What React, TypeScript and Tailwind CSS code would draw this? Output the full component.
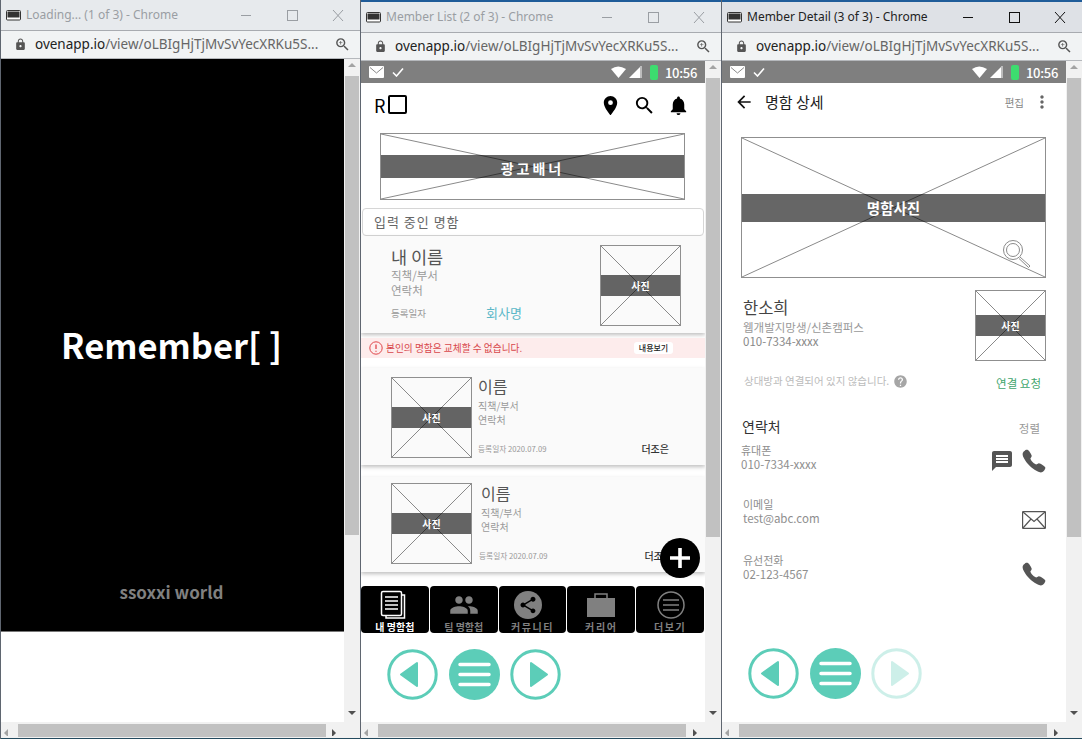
import React from 'react';
import {
  MdLocationOn,
  MdSearch,
  MdNotifications,
  MdArrowBack,
  MdMoreVert,
  MdMessage,
  MdPeople,
  MdHelp,
  MdShare,
  MdLock,
  MdZoomIn,
} from 'react-icons/md';
import { IoCall } from 'react-icons/io5';

const KR = "font-['Noto_Sans_CJK_KR','Noto_Sans',sans-serif]";

const ScrollArrow = ({ dir }: { dir: 'up' | 'down' | 'left' | 'right' }) => {
  const points = { up: '4,7 8,3 12,7', down: '4,4 12,4 8,8', left: '7,4 7,12 3,8', right: '4,4 4,12 8,8' }[dir];
  return (
    <svg viewBox="0 0 16 11" className="w-4 h-[11px] shrink-0">
      <polygon points={points} fill={dir === 'up' || dir === 'left' ? '#a3a3a3' : '#505050'} />
    </svg>
  );
};

const Window = ({
  title,
  active,
  first,
  children,
  className,
}: {
  title: string;
  active?: boolean;
  first?: boolean;
  children: React.ReactNode;
  className: string;
}) => {
  const fg = active ? 'text-[#222]' : 'text-[#9a9ea3]';
  return (
    <div className={`${className} h-full flex flex-col border-l border-[#5f6670] shrink-0 ${active ? 'bg-[#dee1e6]' : 'bg-[#e7eaed]'}`}>
      {!first && <div className="h-0.5 bg-[#1f5c99] shrink-0" />}
      <div className={`h-[31px] shrink-0 flex items-center pl-[5px] text-[12px] border-b border-[#a8abb0] font-['Noto_Sans',sans-serif] ${fg}`}>
        <svg viewBox="0 0 15 11" className="w-[15px] h-[11px] mr-[5px] shrink-0">
          <rect x="0.5" y="0.5" width="14" height="9.5" rx="1" fill="#fff" stroke="#333" />
          <rect x="1.5" y="1.5" width="12" height="6" fill="#333" />
        </svg>
        <span>{title}</span>
        <svg viewBox="0 0 110 16" className={`w-[110px] h-4 ml-auto mr-3 ${active ? 'text-[#111]' : 'text-[#9a9ea3]'}`} fill="none" stroke="currentColor">
          <path d="M3 8.5H13" />
          <rect x="49.5" y="3.5" width="10" height="10" />
          <path d="M95 3L105 14M105 3L95 14" />
        </svg>
      </div>
      <div className="h-[28px] shrink-0 flex items-center bg-[#f1f3f4] border-b border-[#b5b8bc] pl-[13px] text-[13.5px] font-['Noto_Sans',sans-serif]">
        <MdLock className="w-[13px] h-[13px] text-[#555] mr-2 shrink-0" />
        <span className="whitespace-nowrap">
          <span className="text-[#222]">ovenapp.io</span>
          <span className="text-[#666]">/view/oLBIgHjTjMvSvYecXRKu5S...</span>
        </span>
        <MdZoomIn className="w-[17px] h-[17px] text-[#555] ml-auto mr-[9px] shrink-0" />
      </div>
      <div className="flex-1 min-h-0 flex">
        <div className="flex-1 min-w-0 bg-white overflow-hidden relative">{children}</div>
        <div className="w-4 shrink-0 bg-[#f1f1f1] flex flex-col pt-[1px] pb-1">
          <ScrollArrow dir="up" />
          <div className="mx-px mt-[5px] h-[459px] bg-[#c1c1c1]" />
          <div className="flex-1" />
          <ScrollArrow dir="down" />
        </div>
      </div>
      <div className="h-4 shrink-0 bg-[#f1f1f1] flex items-center">
        <ScrollArrow dir="left" />
        <div className="h-[13px] w-[308px] ml-px bg-[#c1c1c1]" />
        <div className="ml-auto flex items-center pr-4">
          <ScrollArrow dir="right" />
        </div>
      </div>
      <div className="h-px bg-[#244a5e] shrink-0" />
    </div>
  );
};

const StatusBar = () => (
  <div className="h-[22px] bg-[#7f7f7f] flex items-center pl-2 pr-2 shrink-0">
    <svg viewBox="0 0 15 12" className="w-[15px] h-3">
      <rect width="15" height="12" rx="1" fill="#fff" />
      <path d="M1 1.5L7.5 7L14 1.5" fill="none" stroke="#8a8a8a" />
    </svg>
    <svg viewBox="0 0 12 10" className="w-3 h-[10px] ml-[8px]">
      <path d="M1 5.5L4.5 9L11 1.5" fill="none" stroke="#fff" strokeWidth="1.6" />
    </svg>
    <svg viewBox="0 0 32 14" className="w-8 h-[14px] ml-auto">
      <path d="M0 4Q7 -1 15 4L7.5 13Z" fill="#fff" />
      <path d="M18 13L30 1V13Z" fill="#fff" />
      <rect x="29" y="1" width="2" height="12" fill="#bdbdbd" />
    </svg>
    <div className="w-2 h-[15px] rounded-[2px] bg-[#3ddc6f] ml-[7px]" />
    <span className={`text-[13px] leading-none text-white font-medium ml-[7px] tracking-[-0.3px] ${KR}`}>10:56</span>
  </div>
);

const Photo = ({ label, className, band, text }: { label: string; className: string; band: string; text: string }) => (
  <div className={`${className} relative flex items-center shrink-0 border border-[#8f8f8f] ${KR}`}>
    <svg className="absolute inset-0 w-full h-full" viewBox="0 0 100 100" preserveAspectRatio="none">
      <path d="M0 0L100 100M100 0L0 100" stroke="#8a8a8a" strokeWidth="1" vectorEffect="non-scaling-stroke" />
    </svg>
    <div className={`${band} relative w-full bg-black/60 flex items-center justify-center text-white font-bold ${text}`}>
      {label}
    </div>
  </div>
);

const ListCard = ({
  className,
  textClass,
  photoClass,
  dateClass,
}: {
  className: string;
  textClass: string;
  photoClass: string;
  dateClass?: string;
}) => (
  <div className={`${className} bg-[#fafafa] shadow-[0_2px_4px_rgba(0,0,0,0.25)] flex pl-[30px]`}>
    <Photo label="사진" className={`w-[81px] h-[81px] ${photoClass}`} band="h-[21px]" text="text-[10px]" />
    <div className={`${textClass} w-[191px]`}>
      <p className="text-[16px] leading-5 text-[#555]">이름</p>
      <p className="text-[10px] leading-[14px] text-[#999] mt-[3px]">직책/부서</p>
      <p className="text-[10px] leading-[14px] text-[#999]">연락처</p>
      <div className={`flex items-center justify-between mt-[15px] ${dateClass ?? ''}`}>
        <span className="text-[7.7px] leading-3 text-[#999]">등록일자 2020.07.09</span>
        <span className="text-[10px] leading-3 font-medium text-[#333] pt-px">더조은</span>
      </div>
    </div>
  </div>
);

const TabItem = ({ label, active, icon, spaced, iconClass }: { label: string; active?: boolean; icon: React.ReactNode; spaced?: boolean; iconClass?: string }) => (
  <div className="bg-black rounded-[4px] flex flex-col items-center pt-[3px] min-w-0">
    <div className={`h-[32px] flex items-center justify-center ${iconClass ?? ''}`}>{icon}</div>
    <span className={`text-[10px] leading-[11px] font-bold whitespace-nowrap ${spaced ? 'tracking-[1.6px]' : ''} ${active ? 'text-white' : 'text-[#808080]'}`}>{label}</span>
  </div>
);

const NavButtons = ({ nextDisabled }: { nextDisabled?: boolean }) => (
  <div className="flex gap-[10.5px] ml-[26px]">
    <svg viewBox="0 0 51 51" className="w-[51px] h-[51px]">
      <circle cx="25.5" cy="25.5" r="23.7" fill="#fff" stroke="#5ccdb8" strokeWidth="3" />
      <path d="M30 14V37L14 25.5Z" fill="#5ccdb8" stroke="#5ccdb8" strokeWidth="2" strokeLinejoin="round" />
    </svg>
    <svg viewBox="0 0 51 51" className="w-[51px] h-[51px]">
      <circle cx="25.5" cy="25.5" r="25.5" fill="#5ccdb8" />
      <path d="M11 15.5H40M11 25.5H40M11 35.5H40" stroke="#fff" strokeWidth="3.5" strokeLinecap="round" />
    </svg>
    <svg viewBox="0 0 51 51" className={`w-[51px] h-[51px] ${nextDisabled ? 'opacity-30' : ''}`}>
      <circle cx="25.5" cy="25.5" r="23.7" fill="#fff" stroke="#5ccdb8" strokeWidth="3" />
      <path d="M21 14V37L37 25.5Z" fill="#5ccdb8" stroke="#5ccdb8" strokeWidth="2" strokeLinejoin="round" />
    </svg>
  </div>
);

const ContactRow = ({ label, value, className, children }: { label: string; value: string; className: string; children: React.ReactNode }) => (
  <div className={`${className} flex items-center pr-[19px]`}>
    <div className="text-[#8e8e8e]">
      <p className="text-[11px] leading-[13px]">{label}</p>
      <p className="text-[11.5px] leading-[14px]">{value}</p>
    </div>
    <div className="ml-auto flex items-center gap-[7px] text-[#555]">{children}</div>
  </div>
);

const ListScreen = () => (
  <div className={`h-full flex flex-col ${KR}`}>
    <StatusBar />
    <div className="h-[50px] shrink-0 flex items-start pt-[11px] pl-[13px]">
      <span className="text-[18px] leading-[22px] text-black">R</span>
      <div className="w-[19px] h-[19px] border-2 border-black rounded-[2px] ml-[3px] mt-px" />
      <MdLocationOn className="w-[23px] h-[23px] ml-[192px] text-black" />
      <MdSearch className="w-[23px] h-[23px] ml-[11px] text-black" />
      <MdNotifications className="w-[23px] h-[23px] ml-[11px] text-black" />
    </div>
    <Photo label="광고배너" className="w-[305px] h-[67px] ml-[19px]" band="h-[23px] pt-[3px]" text="text-[14px] tracking-[3px]" />
    <div className="h-[28px] mt-2 ml-px w-[342px] border border-[#d6d6d6] rounded-[4px] flex items-center pl-[11px] text-[13px] text-[#666] tracking-[1px] shrink-0">
      입력 중인 명함
    </div>
    <div className="h-[97px] shrink-0 bg-[#fafafa] shadow-[0_2px_4px_rgba(0,0,0,0.25)] flex pl-[30px]">
      <div className="pt-[11px] flex-1">
        <p className="text-[17.5px] leading-5 text-[#555]">내 이름</p>
        <p className="text-[11.5px] leading-[15px] mt-[1px] text-[#999]">직책/부서</p>
        <p className="text-[11.5px] leading-[15px] text-[#999]">연락처</p>
        <div className="flex items-center mt-[5px]">
          <span className="text-[9.5px] text-[#999] w-[95px] leading-5">등록일자</span>
          <span className="text-[13px] text-[#5bb8c8] leading-5">회사명</span>
        </div>
      </div>
      <Photo label="사진" className="w-[81px] h-[81px] mt-[9px] mr-[24px]" band="h-[21px]" text="text-[10px]" />
    </div>
    <div className="h-5 mt-[5px] shrink-0 bg-[#fdecec] flex items-center pl-2 pr-[32px]">
      <svg viewBox="0 0 14 14" className="w-[14px] h-[14px] shrink-0">
        <circle cx="7" cy="7" r="6.2" fill="none" stroke="#e0464a" />
        <path d="M7 3.5V8M7 9.7V10.8" stroke="#e0464a" strokeWidth="1.3" />
      </svg>
      <span className="text-[9.7px] text-[#d8474b] ml-[3px]">본인의 명함은 교체할 수 없습니다.</span>
      <span className="ml-auto bg-white rounded-[3px] w-[39px] h-3 flex items-center justify-center text-[8px] font-medium text-[#222]">내용보기</span>
    </div>
    <ListCard className="h-[97px] mt-[10px] shrink-0" textClass="ml-[6px] pt-2" photoClass="mt-[9px]" />
    <ListCard className="h-[95px] mt-3 shrink-0" textClass="ml-[9px] pt-[6px]" photoClass="mt-[6px]" dateClass="-ml-[2px]" />
    <div className="grid grid-cols-5 gap-px w-[343px] h-[47px] mt-[14px] shrink-0">
      <TabItem
        label="내 명함첩"
        active
        iconClass="pr-[3px]"
        icon={
          <svg viewBox="0 0 26 30" className="w-[26px] h-[30px]" fill="none" stroke="#fff" strokeWidth="1.5">
            <path d="M22 5H24.5V28H6V25" />
            <rect x="1.5" y="1.5" width="20" height="24" rx="1.5" />
            <path d="M5 7H18M5 11H18M5 15H18M5 19H18" />
          </svg>
        }
      />
      <TabItem label="팀 명함첩" icon={<MdPeople className="w-[30px] h-[30px] text-[#808080]" />} />
      <TabItem
        label="커뮤니티"
        spaced
        iconClass="pr-2"
        icon={
          <div className="w-7 h-7 rounded-full bg-[#808080] flex items-center justify-center">
            <MdShare className="w-5 h-5 text-black" />
          </div>
        }
      />
      <TabItem
        label="커리어"
        spaced
        icon={
          <svg viewBox="0 0 30 26" className="w-[30px] h-[26px]">
            <path d="M9 6V2H21V6" fill="none" stroke="#808080" strokeWidth="1.5" />
            <rect x="1" y="6" width="28" height="19" fill="#808080" />
          </svg>
        }
      />
      <TabItem
        label="더보기"
        spaced
        iconClass="pl-[2px]"
        icon={
          <svg viewBox="0 0 28 28" className="w-[28px] h-[28px]" fill="none" stroke="#808080" strokeWidth="1.5">
            <circle cx="14" cy="14" r="13" />
            <path d="M6 9H22M6 14H22M6 19H22" />
          </svg>
        }
      />
    </div>
    <div className="mt-4 shrink-0">
      <NavButtons />
    </div>
    <div className="absolute left-[299px] top-[477px] w-10 h-10 rounded-full bg-black flex items-center justify-center">
      <svg viewBox="0 0 20 20" className="w-5 h-5">
        <path d="M10 0V20M0 10H20" stroke="#fff" strokeWidth="3.6" />
      </svg>
    </div>
  </div>
);

const DetailScreen = () => (
  <div className={`h-full flex flex-col ${KR}`}>
    <StatusBar />
    <div className="h-[54px] shrink-0 flex items-start pt-[9px] pl-3 pr-[14px]">
      <MdArrowBack className="w-5 h-5 text-[#111]" />
      <span className="text-[15px] leading-5 ml-[11px] text-[#222]">명함 상세</span>
      <span className="ml-auto text-[10.5px] leading-5 mt-[1px] text-[#888]">편집</span>
      <MdMoreVert className="w-5 h-5 ml-2 text-[#666]" />
    </div>
    <div className="relative shrink-0">
      <Photo label="명함사진" className="w-[305px] h-[141px] ml-[19px]" band="h-[28px] pt-px" text="text-[14.5px]" />
      <svg viewBox="0 0 30 30" className="absolute left-[280px] top-[102px] w-[30px] h-[30px]" fill="#fff" stroke="#8a8a8a" strokeWidth="1">
        <circle cx="11" cy="11" r="9.5" />
        <circle cx="11" cy="11" r="6.5" />
        <path d="M18 18L28 27L26.5 28.5L17 19.5" />
      </svg>
    </div>
    <div className="flex mt-3 shrink-0 pl-[21px] pr-[20px]">
      <div className="pt-[7px]">
        <p className="text-[16.5px] leading-5 text-[#444]">한소희</p>
        <p className="text-[11.5px] leading-[14px] mt-[3px] text-[#999]">웹개발지망생/신촌캠퍼스</p>
        <p className="text-[11.5px] leading-[14px] text-[#888]">010-7334-xxxx</p>
      </div>
      <Photo label="사진" className="w-[71px] h-[71px] ml-auto" band="h-[21px]" text="text-[10px]" />
    </div>
    <div className="flex items-center mt-[10px] h-[20px] shrink-0 pl-[22px] pr-[25px]">
      <span className="text-[10.5px] text-[#bbb]">상대방과 연결되어 있지 않습니다.</span>
      <MdHelp className="w-[15px] h-[15px] ml-[4px] text-[#a6a6a6]" />
      <span className="ml-auto text-[11.5px] mt-[6px] text-[#3fa66e]">연결 요청</span>
    </div>
    <div className="flex items-center mt-[25px] h-5 shrink-0 pl-5 pr-[26px]">
      <span className="text-[14px] text-[#333]">연락처</span>
      <span className="ml-auto text-[11.5px] mt-[6px] text-[#999]">정렬</span>
    </div>
    <ContactRow label="휴대폰" value="010-7334-xxxx" className="h-[27px] mt-2 pl-[19px] shrink-0">
      <MdMessage className="w-6 h-6 mt-[7px]" />
      <IoCall className="w-[26px] h-[26px] mt-[7px]" />
    </ContactRow>
    <ContactRow label="이메일" value="test@abc.com" className="h-[27px] mt-[27px] pl-[21px] shrink-0">
      <svg viewBox="0 0 24 18" className="w-6 h-[18px] mt-4 mr-px" fill="none" stroke="#555" strokeWidth="1.2">
        <rect x="0.6" y="0.6" width="22.8" height="16.8" rx="0.5" />
        <path d="M1 1L12 10.5L23 1M1 17L9 8M23 17L15 8" />
      </svg>
    </ContactRow>
    <ContactRow label="유선전화" value="02-123-4567" className="h-[27px] mt-[29px] pl-[21px] shrink-0">
      <IoCall className="w-[26px] h-[26px] mt-[13px]" />
    </ContactRow>
    <div className="mt-[67px] shrink-0">
      <NavButtons nextDisabled />
    </div>
  </div>
);

export default function App() {
  return (
    <div className="w-[1082px] h-[739px] flex overflow-hidden bg-[#dee1e6]">
      <Window first title="Loading... (1 of 3) - Chrome" className="w-[360px]">
        <div className={`h-[573px] bg-black border-b border-[#777] flex flex-col items-center pr-[2px] ${KR}`}>
          <p className="mt-[259px] text-[34.5px] leading-[52px] font-bold text-white">Remember[ ]</p>
          <p className="mt-[209px] text-[17px] leading-[26px] font-bold text-[#808080]">ssoxxi world</p>
        </div>
      </Window>
      <Window title="Member List (2 of 3) - Chrome" className="w-[361px]">
        <ListScreen />
      </Window>
      <Window active title="Member Detail (3 of 3) - Chrome" className="w-[361px]">
        <DetailScreen />
      </Window>
    </div>
  );
}
